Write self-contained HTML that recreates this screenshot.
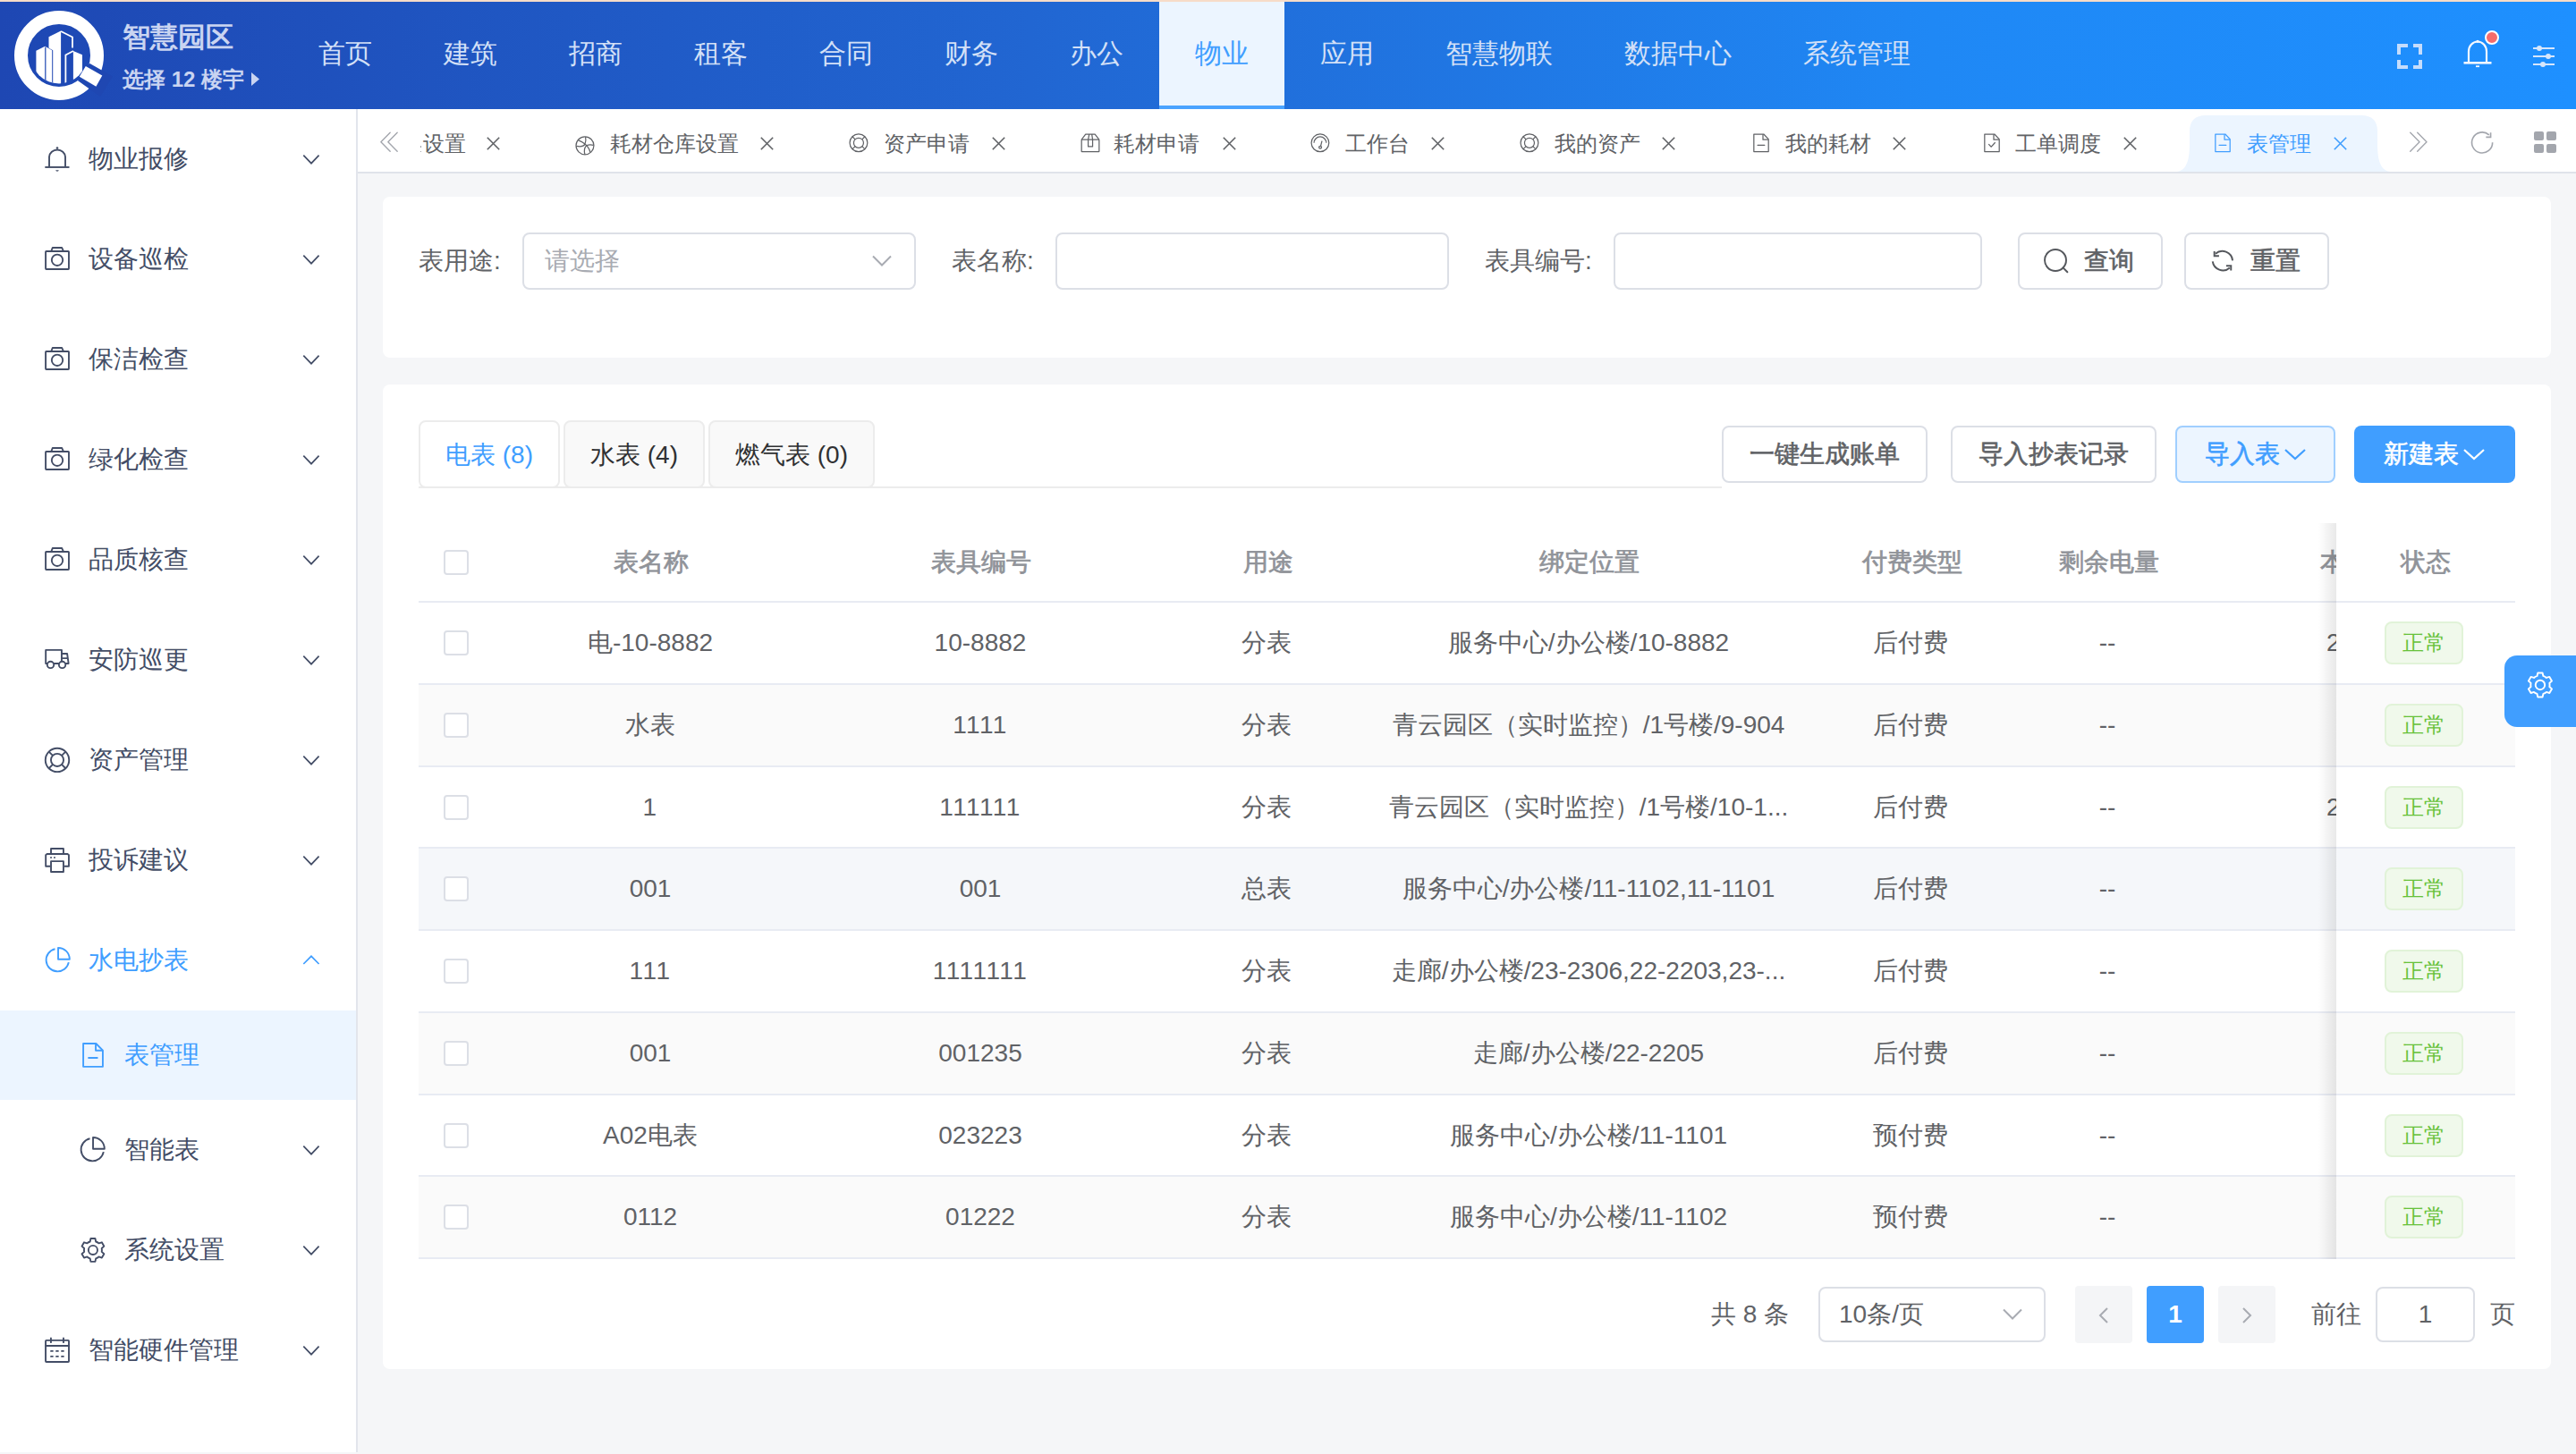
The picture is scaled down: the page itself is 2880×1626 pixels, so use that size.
<!DOCTYPE html>
<html><head><meta charset="utf-8"><title>表管理</title>
<style>
*{margin:0;padding:0;box-sizing:border-box}
html,body{width:2880px;height:1626px;overflow:hidden;background:#f5f6f8;font-family:"Liberation Sans", sans-serif}
.a{position:absolute}
.t{position:absolute;white-space:nowrap;line-height:1}
svg{position:absolute;overflow:visible}
</style></head><body>

<div class="a" style="left:0px;top:0px;width:2880px;height:2px;background:#f7dcc8"></div>
<div class="a" style="left:0px;top:2px;width:2880px;height:120px;background:linear-gradient(90deg,#1e47b3 0%,#2166d2 40%,#1f88f5 75%,#1e90ff 100%)"></div>
<svg style="left:0;top:0" width="130" height="122" viewBox="0 0 130 122">
<defs><clipPath id="lc"><circle cx="66" cy="62" r="31.5"/></clipPath></defs>
<circle cx="66" cy="62" r="42.5" fill="none" stroke="#fff" stroke-width="15"/>
<polygon points="100,70.8 126,85.6 112,108 86.8,90" fill="#1f47b2"/>
<polygon points="95.8,74.1 114.3,84.6 107.4,96.7 88.8,85.8" fill="#fff"/>
<g clip-path="url(#lc)">
<polygon points="54.5,41.3 68.1,34.4 68.1,100 54.5,100" fill="#fff"/>
<path d="M68.1,35 L81,41.5 V53.5" fill="none" stroke="#fff" stroke-width="1.8"/>
<polygon points="39.5,57.2 50.3,51.6 59.2,56.3 59.2,100 39.5,100" fill="#1f47b2"/>
<polygon points="40.4,56.8 50.3,51.8 58.2,56.3 58.2,100 40.4,100" fill="#fff"/>
<path d="M50.8,52.5 V100" stroke="#1f47b2" stroke-width="1.2"/>
<polygon points="81.9,57 92,61.2 92,100 81.9,100" fill="#fff"/>
<path d="M73.4,100 V61.5 L82,57" fill="none" stroke="#fff" stroke-width="1.8"/>
</g>
</svg>
<div class="t" style="left:137px;top:26.25px;font-size:31px;color:#c9d4f1;font-weight:700;">智慧园区</div>
<div class="t" style="left:137px;top:76.50px;font-size:24px;color:#c9d4f1;font-weight:700;">选择 12 楼宇</div>
<svg style="left:281px;top:81px" width="10" height="16"><polygon points="0,0 9,7.5 0,15" fill="#c9d4f1"/></svg>
<div class="t" style="left:-614.00px;width:2000px;text-align:center;top:45.00px;font-size:30px;color:#d3e0f7;font-weight:400;">首页</div>
<div class="t" style="left:-474.00px;width:2000px;text-align:center;top:45.00px;font-size:30px;color:#d3e0f7;font-weight:400;">建筑</div>
<div class="t" style="left:-334.00px;width:2000px;text-align:center;top:45.00px;font-size:30px;color:#d3e0f7;font-weight:400;">招商</div>
<div class="t" style="left:-194.00px;width:2000px;text-align:center;top:45.00px;font-size:30px;color:#d3e0f7;font-weight:400;">租客</div>
<div class="t" style="left:-54.00px;width:2000px;text-align:center;top:45.00px;font-size:30px;color:#d3e0f7;font-weight:400;">合同</div>
<div class="t" style="left:86.00px;width:2000px;text-align:center;top:45.00px;font-size:30px;color:#d3e0f7;font-weight:400;">财务</div>
<div class="t" style="left:226.00px;width:2000px;text-align:center;top:45.00px;font-size:30px;color:#d3e0f7;font-weight:400;">办公</div>
<div class="a" style="left:1296px;top:2px;width:140px;height:120px;background:#ecf5ff"></div>
<div class="a" style="left:1296px;top:118px;width:140px;height:4px;background:#4aa3ff"></div>
<div class="t" style="left:366.00px;width:2000px;text-align:center;top:45.00px;font-size:30px;color:#409eff;font-weight:500;">物业</div>
<div class="t" style="left:506.00px;width:2000px;text-align:center;top:45.00px;font-size:30px;color:#d3e0f7;font-weight:400;">应用</div>
<div class="t" style="left:676.00px;width:2000px;text-align:center;top:45.00px;font-size:30px;color:#d3e0f7;font-weight:400;">智慧物联</div>
<div class="t" style="left:876.00px;width:2000px;text-align:center;top:45.00px;font-size:30px;color:#d3e0f7;font-weight:400;">数据中心</div>
<div class="t" style="left:1076.00px;width:2000px;text-align:center;top:45.00px;font-size:30px;color:#d3e0f7;font-weight:400;">系统管理</div>
<svg style="left:2680px;top:49px" width="28" height="28" viewBox="0 0 28 28" fill="none" stroke="#c5dcfb" stroke-width="4">
<path d="M2,12 V2 H12 M18,2 H26 V12 M26,18 V26 H18 M12,26 H2 V18"/></svg>
<svg style="left:2752px;top:40px" width="40" height="40" viewBox="0 0 40 40" fill="none" stroke="#f3f7ff" stroke-width="2.2">
<path d="M8,30 V17.5 A10,11 0 0 1 28,17.5 V30"/>
<path d="M2.5,30.3 H33.5" stroke-width="2.6"/>
<path d="M16,34.2 H20" stroke-width="1.8"/>
<circle cx="18" cy="6.3" r="1.6" fill="#f3f7ff" stroke="none"/>
</svg>
<div class="a" style="left:2778px;top:34px;width:16px;height:16px;border-radius:50%;background:#f56c6c;border:2px solid #fff"></div>
<svg style="left:2832px;top:48px" width="26" height="30" viewBox="0 0 26 30" fill="#d6e6fb" stroke="#d6e6fb" stroke-width="2.2">
<path d="M0,6 H24 M0,15 H24 M0,24 H24" fill="none"/>
<circle cx="7" cy="6" r="3" stroke="none"/><circle cx="17" cy="15" r="3" stroke="none"/><circle cx="11" cy="24" r="3" stroke="none"/>
</svg>
<div class="a" style="left:0px;top:122px;width:398px;height:1502px;background:#fff"></div>
<div class="a" style="left:398px;top:122px;width:2px;height:1502px;background:#e2e5ec"></div>
<svg style="left:40px;top:153px" width="50" height="50" viewBox="0 0 1454 1454" fill="none" stroke="#434d66" stroke-width="55" stroke-linejoin="round"><path d="M437,975 V650 A262,245 0 0 1 960,650 V975"/><path d="M300,988 H1090" stroke-linecap="butt"/><circle cx="698" cy="365" r="38" fill="#434d66" stroke="none"/><path d="M645,1085 H750 A53,45 0 0 1 645,1085Z" fill="#434d66" stroke="none"/></svg>
<div class="t" style="left:99px;top:164.00px;font-size:28px;color:#434d66;font-weight:400;">物业报修</div>
<svg style="left:338px;top:172px" width="20" height="12" viewBox="0 0 20 12"><path d="M1.3,1.7 L10,10.7 L18.6,1.7" fill="none" stroke="#434d66" stroke-width="1.7"/></svg>
<svg style="left:40px;top:265px" width="50" height="50" viewBox="0 0 1454 1454" fill="none" stroke="#434d66" stroke-width="55" stroke-linejoin="round"><rect x="322" y="465" width="753" height="580" rx="18"/><path d="M500,465 L545,350 H850 L900,465"/><circle cx="698" cy="750" r="180"/></svg>
<div class="t" style="left:99px;top:276.00px;font-size:28px;color:#434d66;font-weight:400;">设备巡检</div>
<svg style="left:338px;top:284px" width="20" height="12" viewBox="0 0 20 12"><path d="M1.3,1.7 L10,10.7 L18.6,1.7" fill="none" stroke="#434d66" stroke-width="1.7"/></svg>
<svg style="left:40px;top:377px" width="50" height="50" viewBox="0 0 1454 1454" fill="none" stroke="#434d66" stroke-width="55" stroke-linejoin="round"><rect x="322" y="465" width="753" height="580" rx="18"/><path d="M500,465 L545,350 H850 L900,465"/><circle cx="698" cy="750" r="180"/></svg>
<div class="t" style="left:99px;top:388.00px;font-size:28px;color:#434d66;font-weight:400;">保洁检查</div>
<svg style="left:338px;top:396px" width="20" height="12" viewBox="0 0 20 12"><path d="M1.3,1.7 L10,10.7 L18.6,1.7" fill="none" stroke="#434d66" stroke-width="1.7"/></svg>
<svg style="left:40px;top:489px" width="50" height="50" viewBox="0 0 1454 1454" fill="none" stroke="#434d66" stroke-width="55" stroke-linejoin="round"><rect x="322" y="465" width="753" height="580" rx="18"/><path d="M500,465 L545,350 H850 L900,465"/><circle cx="698" cy="750" r="180"/></svg>
<div class="t" style="left:99px;top:500.00px;font-size:28px;color:#434d66;font-weight:400;">绿化检查</div>
<svg style="left:338px;top:508px" width="20" height="12" viewBox="0 0 20 12"><path d="M1.3,1.7 L10,10.7 L18.6,1.7" fill="none" stroke="#434d66" stroke-width="1.7"/></svg>
<svg style="left:40px;top:601px" width="50" height="50" viewBox="0 0 1454 1454" fill="none" stroke="#434d66" stroke-width="55" stroke-linejoin="round"><rect x="322" y="465" width="753" height="580" rx="18"/><path d="M500,465 L545,350 H850 L900,465"/><circle cx="698" cy="750" r="180"/></svg>
<div class="t" style="left:99px;top:612.00px;font-size:28px;color:#434d66;font-weight:400;">品质核查</div>
<svg style="left:338px;top:620px" width="20" height="12" viewBox="0 0 20 12"><path d="M1.3,1.7 L10,10.7 L18.6,1.7" fill="none" stroke="#434d66" stroke-width="1.7"/></svg>
<svg style="left:40px;top:713px" width="50" height="50" viewBox="0 0 1454 1454" fill="none" stroke="#434d66" stroke-width="55" stroke-linejoin="round"><path d="M380,842 H325 V405 H842 V760"/><path d="M842,522 H1020 L1065,842 H960 M842,672 H1040 M770,842 H580"/><circle cx="480" cy="885" r="108" fill="#fff"/><circle cx="860" cy="885" r="108" fill="#fff"/></svg>
<div class="t" style="left:99px;top:724.00px;font-size:28px;color:#434d66;font-weight:400;">安防巡更</div>
<svg style="left:338px;top:732px" width="20" height="12" viewBox="0 0 20 12"><path d="M1.3,1.7 L10,10.7 L18.6,1.7" fill="none" stroke="#434d66" stroke-width="1.7"/></svg>
<svg style="left:40px;top:825px" width="50" height="50" viewBox="0 0 1454 1454" fill="none" stroke="#434d66" stroke-width="55" stroke-linejoin="round"><circle cx="698" cy="725" r="385"/><circle cx="698" cy="725" r="205"/><path d="M843,580 L970,453 M553,580 L426,453 M553,870 L426,997 M843,870 L970,997"/></svg>
<div class="t" style="left:99px;top:836.00px;font-size:28px;color:#434d66;font-weight:400;">资产管理</div>
<svg style="left:338px;top:844px" width="20" height="12" viewBox="0 0 20 12"><path d="M1.3,1.7 L10,10.7 L18.6,1.7" fill="none" stroke="#434d66" stroke-width="1.7"/></svg>
<svg style="left:40px;top:937px" width="50" height="50" viewBox="0 0 1454 1454" fill="none" stroke="#434d66" stroke-width="55" stroke-linejoin="round"><path d="M495,525 V347 H900 V525"/><path d="M470,925 H325 V560 L360,525 H1040 L1075,560 V925 H925"/><rect x="495" y="760" width="405" height="345"/><rect x="470" y="615" width="50" height="50" fill="#434d66" stroke="none"/><rect x="585" y="615" width="50" height="50" fill="#434d66" stroke="none"/></svg>
<div class="t" style="left:99px;top:948.00px;font-size:28px;color:#434d66;font-weight:400;">投诉建议</div>
<svg style="left:338px;top:956px" width="20" height="12" viewBox="0 0 20 12"><path d="M1.3,1.7 L10,10.7 L18.6,1.7" fill="none" stroke="#434d66" stroke-width="1.7"/></svg>
<svg style="left:40px;top:1049px" width="50" height="50" viewBox="0 0 1454 1454" fill="none" stroke="#409eff" stroke-width="55" stroke-linejoin="round"><path d="M625,355 A370,370 0 1 0 1070,790"/><path d="M728,690 V318 A372,372 0 0 1 1100,690 Z"/></svg>
<div class="t" style="left:99px;top:1060.00px;font-size:28px;color:#409eff;font-weight:400;">水电抄表</div>
<svg style="left:338px;top:1068px" width="20" height="12" viewBox="0 0 20 12"><path d="M1.3,10 L10,1.3 L18.6,10" fill="none" stroke="#409eff" stroke-width="1.7"/></svg>
<div class="a" style="left:0px;top:1130px;width:398px;height:100px;background:#ecf5ff"></div>
<svg style="left:79px;top:1155px" width="50" height="50" viewBox="0 0 1454 1454" fill="none" stroke="#409eff" stroke-width="55" stroke-linejoin="round"><path d="M825,350 H410 V1100 H1045 V570 Z"/><path d="M815,355 V575 H1040"/><path d="M585,815 H865" stroke-linecap="round"/></svg>
<div class="t" style="left:139px;top:1166.00px;font-size:28px;color:#409eff;font-weight:400;">表管理</div>
<svg style="left:79px;top:1261px" width="50" height="50" viewBox="0 0 1454 1454" fill="none" stroke="#434d66" stroke-width="55" stroke-linejoin="round"><path d="M625,355 A370,370 0 1 0 1070,790"/><path d="M728,690 V318 A372,372 0 0 1 1100,690 Z"/></svg>
<div class="t" style="left:139px;top:1272.00px;font-size:28px;color:#434d66;font-weight:400;">智能表</div>
<svg style="left:338px;top:1280px" width="20" height="12" viewBox="0 0 20 12"><path d="M1.3,1.7 L10,10.7 L18.6,1.7" fill="none" stroke="#434d66" stroke-width="1.7"/></svg>
<svg style="left:79px;top:1373px" width="50" height="50" viewBox="0 0 1454 1454" fill="none" stroke="#434d66" stroke-width="55" stroke-linejoin="round"><path d="M630.6,450.8 L652.1,350.0 L797.9,350.0 L819.4,450.8 A290,290 0 0 1 915.3,506.1 L1013.3,474.4 L1086.2,600.6 L1009.7,669.7 A290,290 0 0 1 1009.7,780.3 L1086.2,849.4 L1013.3,975.6 L915.3,943.9 A290,290 0 0 1 819.4,999.2 L797.9,1100.0 L652.1,1100.0 L630.6,999.2 A290,290 0 0 1 534.7,943.9 L436.7,975.6 L363.8,849.4 L440.3,780.3 A290,290 0 0 1 440.3,669.7 L363.8,600.6 L436.7,474.4 L534.7,506.1 A290,290 0 0 1 630.6,450.8 Z"/><circle cx="725" cy="725" r="147"/></svg>
<div class="t" style="left:139px;top:1384.00px;font-size:28px;color:#434d66;font-weight:400;">系统设置</div>
<svg style="left:338px;top:1392px" width="20" height="12" viewBox="0 0 20 12"><path d="M1.3,1.7 L10,10.7 L18.6,1.7" fill="none" stroke="#434d66" stroke-width="1.7"/></svg>
<svg style="left:39px;top:1485px" width="50" height="50" viewBox="0 0 1454 1454" fill="none" stroke="#434d66" stroke-width="55" stroke-linejoin="round"><rect x="350" y="405" width="755" height="700" rx="25"/><path d="M350,580 H1105 M522,335 V470 M930,335 V470" stroke-linecap="round"/><rect x="500" y="730" width="100" height="50" rx="12" fill="#434d66" stroke="none"/><rect x="675" y="730" width="100" height="50" rx="12" fill="#434d66" stroke="none"/><rect x="850" y="730" width="100" height="50" rx="12" fill="#434d66" stroke="none"/><rect x="500" y="905" width="100" height="50" rx="12" fill="#434d66" stroke="none"/><rect x="675" y="905" width="100" height="50" rx="12" fill="#434d66" stroke="none"/><rect x="850" y="905" width="100" height="50" rx="12" fill="#434d66" stroke="none"/></svg>
<div class="t" style="left:99px;top:1496.00px;font-size:28px;color:#434d66;font-weight:400;">智能硬件管理</div>
<svg style="left:338px;top:1504px" width="20" height="12" viewBox="0 0 20 12"><path d="M1.3,1.7 L10,10.7 L18.6,1.7" fill="none" stroke="#434d66" stroke-width="1.7"/></svg>
<div class="a" style="left:400px;top:122px;width:2480px;height:70px;background:#fff"></div>
<div class="a" style="left:400px;top:192px;width:2480px;height:2px;background:#dfe3ea"></div>
<svg style="left:415px;top:139px" width="40" height="40" viewBox="0 0 1454 1454" fill="none" stroke="#a3a6ad" stroke-width="50" stroke-linejoin="round"><path d="M770,340 L395,715 L770,1100 M1060,340 L685,715 L1060,1100" stroke-linecap="round"/></svg>
<svg style="left:0;top:0" width="2880" height="200"><path d="M2434,192 C2446,190 2448,176 2448,160 V147 Q2448,129 2466,129 H2640 Q2658,129 2658,147 V160 C2658,176 2660,190 2672,192 Z" fill="#ecf5ff"/></svg>
<div class="t" style="left:472.8px;top:148.50px;font-size:24px;color:#606266;font-weight:400;">设置</div>
<svg style="left:544px;top:153px" width="15" height="15" viewBox="0 0 15 15"><path d="M0.8,0.8 L14.2,14.2 M14.2,0.8 L0.8,14.2" stroke="#606266" stroke-width="1.6" fill="none"/></svg>
<svg style="left:635.1089408528198px;top:140px" width="40" height="40" viewBox="0 0 1454 1454" fill="none" stroke="#606266" stroke-width="45" stroke-linejoin="round"><circle cx="690" cy="830" r="362"/><path d="M712,478 C740,600 720,700 690,770 M425,615 C540,660 620,700 700,770 M340,850 C480,880 640,860 700,770 M700,770 C800,860 880,960 905,1105 M770,820 C860,780 960,790 1040,815 M690,1190 C640,1040 660,930 745,830"/></svg>
<div class="t" style="left:681.6px;top:148.50px;font-size:24px;color:#606266;font-weight:400;">耗材仓库设置</div>
<svg style="left:850px;top:153px" width="15" height="15" viewBox="0 0 15 15"><path d="M0.8,0.8 L14.2,14.2 M14.2,0.8 L0.8,14.2" stroke="#606266" stroke-width="1.6" fill="none"/></svg>
<svg style="left:940.4587345254471px;top:140px" width="40" height="40" viewBox="0 0 1454 1454" fill="none" stroke="#606266" stroke-width="45" stroke-linejoin="round"><circle cx="725" cy="720" r="360"/><circle cx="725" cy="720" r="200"/><path d="M866,579 L980,465 M584,579 L470,465 M584,861 L470,975 M866,861 L980,975"/></svg>
<div class="t" style="left:988px;top:148.50px;font-size:24px;color:#606266;font-weight:400;">资产申请</div>
<svg style="left:1108.5px;top:153px" width="15" height="15" viewBox="0 0 15 15"><path d="M0.8,0.8 L14.2,14.2 M14.2,0.8 L0.8,14.2" stroke="#606266" stroke-width="1.6" fill="none"/></svg>
<svg style="left:1199.1089408528196px;top:140px" width="40" height="40" viewBox="0 0 1454 1454" fill="none" stroke="#606266" stroke-width="45" stroke-linejoin="round"><rect x="370" y="590" width="715" height="490" rx="15"/><path d="M370,590 L535,370 H915 L1085,590 M640,590 L680,380 M790,380 L820,590 M640,590 V870 H820 V590"/></svg>
<div class="t" style="left:1245px;top:148.50px;font-size:24px;color:#606266;font-weight:400;">耗材申请</div>
<svg style="left:1366.6px;top:153px" width="15" height="15" viewBox="0 0 15 15"><path d="M0.8,0.8 L14.2,14.2 M14.2,0.8 L0.8,14.2" stroke="#606266" stroke-width="1.6" fill="none"/></svg>
<svg style="left:1455.958734525447px;top:140px" width="40" height="40" viewBox="0 0 1454 1454" fill="none" stroke="#606266" stroke-width="45" stroke-linejoin="round"><circle cx="725" cy="720" r="358"/><path d="M475,720 A250,250 0 0 1 975,720" /><path d="M800,640 L745,850"/><circle cx="730" cy="900" r="52"/></svg>
<div class="t" style="left:1503.8px;top:148.50px;font-size:24px;color:#606266;font-weight:400;">工作台</div>
<svg style="left:1600px;top:153px" width="15" height="15" viewBox="0 0 15 15"><path d="M0.8,0.8 L14.2,14.2 M14.2,0.8 L0.8,14.2" stroke="#606266" stroke-width="1.6" fill="none"/></svg>
<svg style="left:1689.958734525447px;top:140px" width="40" height="40" viewBox="0 0 1454 1454" fill="none" stroke="#606266" stroke-width="45" stroke-linejoin="round"><circle cx="725" cy="720" r="360"/><circle cx="725" cy="720" r="200"/><path d="M866,579 L980,465 M584,579 L470,465 M584,861 L470,975 M866,861 L980,975"/></svg>
<div class="t" style="left:1738px;top:148.50px;font-size:24px;color:#606266;font-weight:400;">我的资产</div>
<svg style="left:1858px;top:153px" width="15" height="15" viewBox="0 0 15 15"><path d="M0.8,0.8 L14.2,14.2 M14.2,0.8 L0.8,14.2" stroke="#606266" stroke-width="1.6" fill="none"/></svg>
<svg style="left:1948.5207702888583px;top:140px" width="40" height="40" viewBox="0 0 1454 1454" fill="none" stroke="#606266" stroke-width="45" stroke-linejoin="round"><path d="M830,365 H430 V1075 H1025 V570 Z"/><path d="M800,370 V590 H1020"/><path d="M585,815 H865" stroke-linecap="round"/></svg>
<div class="t" style="left:1995.7px;top:148.50px;font-size:24px;color:#606266;font-weight:400;">我的耗材</div>
<svg style="left:2116px;top:153px" width="15" height="15" viewBox="0 0 15 15"><path d="M0.8,0.8 L14.2,14.2 M14.2,0.8 L0.8,14.2" stroke="#606266" stroke-width="1.6" fill="none"/></svg>
<svg style="left:2206.720770288858px;top:140px" width="40" height="40" viewBox="0 0 1454 1454" fill="none" stroke="#606266" stroke-width="45" stroke-linejoin="round"><path d="M830,365 H430 V1075 H1025 V570 Z"/><path d="M800,370 V590 H1020"/><path d="M590,770 L700,880 L860,700"/></svg>
<div class="t" style="left:2253px;top:148.50px;font-size:24px;color:#606266;font-weight:400;">工单调度</div>
<svg style="left:2374px;top:153px" width="15" height="15" viewBox="0 0 15 15"><path d="M0.8,0.8 L14.2,14.2 M14.2,0.8 L0.8,14.2" stroke="#606266" stroke-width="1.6" fill="none"/></svg>
<svg style="left:2464.720770288858px;top:140px" width="40" height="40" viewBox="0 0 1454 1454" fill="none" stroke="#409eff" stroke-width="45" stroke-linejoin="round"><path d="M830,365 H430 V1075 H1025 V570 Z"/><path d="M800,370 V590 H1020"/><path d="M585,815 H865" stroke-linecap="round"/></svg>
<div class="t" style="left:2512px;top:148.50px;font-size:24px;color:#409eff;font-weight:400;">表管理</div>
<svg style="left:2609px;top:153px" width="15" height="15" viewBox="0 0 15 15"><path d="M0.8,0.8 L14.2,14.2 M14.2,0.8 L0.8,14.2" stroke="#409eff" stroke-width="1.6" fill="none"/></svg>
<div class="a" style="left:469.8px;top:163.4px;width:1.4px;height:1.4px;background:#8a8d92;border-radius:50%"></div>
<div class="a" style="left:469.8px;top:168.6px;width:1.4px;height:1.4px;background:#8a8d92;border-radius:50%"></div>
<svg style="left:2684px;top:139px" width="40" height="40" viewBox="0 0 1454 1454" fill="none" stroke="#a3a6ad" stroke-width="50" stroke-linejoin="round"><path d="M390,340 L765,715 L390,1100 M680,340 L1055,715 L680,1100" stroke-linecap="round"/></svg>
<svg style="left:2755px;top:139px" width="40" height="40" viewBox="0 0 1454 1454" fill="none" stroke="#a3a6ad" stroke-width="60" stroke-linejoin="round"><path d="M1150,735 A420,420 0 1 1 1010,430"/><path d="M1075,335 V520 H885" stroke-linejoin="miter"/></svg>
<div class="a" style="left:2833px;top:147px;width:10.5px;height:10px;background:#a3a6ad;border-radius:2px"></div>
<div class="a" style="left:2847px;top:147px;width:10.5px;height:10px;background:#a3a6ad;border-radius:2px"></div>
<div class="a" style="left:2833px;top:161px;width:10.5px;height:10px;background:#a3a6ad;border-radius:2px"></div>
<div class="a" style="left:2847px;top:161px;width:10.5px;height:10px;background:#a3a6ad;border-radius:2px"></div>
<div class="a" style="left:428px;top:220px;width:2424px;height:180px;background:#fff;border-radius:8px"></div>
<div class="t" style="left:468px;top:278.00px;font-size:28px;color:#606266;font-weight:400;">表用途:</div>
<div class="a" style="left:584px;top:260px;width:440px;height:64px;border:2px solid #dcdfe6;border-radius:8px;background:#fff"></div>
<div class="t" style="left:609px;top:278.00px;font-size:28px;color:#a8abb2;font-weight:400;">请选择</div>
<svg style="left:975px;top:285px" width="22" height="14" viewBox="0 0 22 14"><path d="M1,1.5 L11,11.5 L21,1.5" fill="none" stroke="#a8abb2" stroke-width="2"/></svg>
<div class="t" style="left:1064px;top:278.00px;font-size:28px;color:#606266;font-weight:400;">表名称:</div>
<div class="a" style="left:1180px;top:260px;width:440px;height:64px;border:2px solid #dcdfe6;border-radius:8px;background:#fff"></div>
<div class="t" style="left:1660px;top:278.00px;font-size:28px;color:#606266;font-weight:400;">表具编号:</div>
<div class="a" style="left:1804px;top:260px;width:412px;height:64px;border:2px solid #dcdfe6;border-radius:8px;background:#fff"></div>
<div class="a" style="left:2256px;top:260px;width:162px;height:64px;border:2px solid #dcdfe6;border-radius:8px;background:#fff"></div>
<svg style="left:2276px;top:273px" width="40" height="40" viewBox="0 0 1454 1454" fill="none" stroke="#55585d" stroke-width="72" stroke-linejoin="round"><circle cx="800" cy="655" r="435"/><path d="M1110,960 L1285,1135" stroke-linecap="round"/></svg>
<div class="t" style="left:2330px;top:278.00px;font-size:28px;color:#606266;font-weight:400;-webkit-text-stroke:0.6px #606266">查询</div>
<div class="a" style="left:2442px;top:260px;width:162px;height:64px;border:2px solid #dcdfe6;border-radius:8px;background:#fff"></div>
<svg style="left:2464px;top:273px" width="40" height="40" viewBox="0 0 1454 1454" fill="none" stroke="#55585d" stroke-width="72" stroke-linejoin="round"><path d="M1165,665 A420,420 0 0 0 470,390"/><path d="M425,290 V480 H615" stroke-linejoin="miter"/><path d="M355,705 A420,420 0 0 0 1050,960"/><path d="M1100,1075 V885 H905" stroke-linejoin="miter"/></svg>
<div class="t" style="left:2516px;top:278.00px;font-size:28px;color:#606266;font-weight:400;-webkit-text-stroke:0.6px #606266">重置</div>
<div class="a" style="left:428px;top:430px;width:2424px;height:1101px;background:#fff;border-radius:8px"></div>
<div class="a" style="left:468px;top:544px;width:1457px;height:2px;background:#ececec"></div>
<div class="a" style="left:468px;top:470px;width:158px;height:76px;background:#fff;border:2px solid #ececec;border-radius:8px"></div>
<div class="a" style="left:630px;top:470px;width:158px;height:76px;background:#f9f9f9;border:2px solid #ececec;border-radius:8px"></div>
<div class="a" style="left:792px;top:470px;width:186px;height:76px;background:#f9f9f9;border:2px solid #ececec;border-radius:8px"></div>
<div class="t" style="left:-453.00px;width:2000px;text-align:center;top:495.00px;font-size:28px;color:#409eff;font-weight:400;">电表 (8)</div>
<div class="t" style="left:-291.00px;width:2000px;text-align:center;top:495.00px;font-size:28px;color:#303133;font-weight:400;">水表 (4)</div>
<div class="t" style="left:-115.00px;width:2000px;text-align:center;top:495.00px;font-size:28px;color:#303133;font-weight:400;">燃气表 (0)</div>
<div class="a" style="left:1925px;top:476px;width:230px;height:64px;border:2px solid #dcdfe6;border-radius:8px;background:#fff"></div>
<div class="t" style="left:1040.00px;width:2000px;text-align:center;top:493.50px;font-size:28px;color:#606266;font-weight:400;-webkit-text-stroke:0.6px #606266">一键生成账单</div>
<div class="a" style="left:2181px;top:476px;width:230px;height:64px;border:2px solid #dcdfe6;border-radius:8px;background:#fff"></div>
<div class="t" style="left:1296.00px;width:2000px;text-align:center;top:493.50px;font-size:28px;color:#606266;font-weight:400;-webkit-text-stroke:0.6px #606266">导入抄表记录</div>
<div class="a" style="left:2432px;top:476px;width:179px;height:64px;border:2px solid #a0cfff;border-radius:8px;background:#ecf5ff"></div>
<div class="t" style="left:2464.5px;top:493.50px;font-size:28px;color:#409eff;font-weight:400;-webkit-text-stroke:0.6px #409eff">导入表</div>
<svg style="left:2552.5px;top:501px" width="26" height="14" viewBox="0 0 26 14"><path d="M2,2 L13,12 L24,2" fill="none" stroke="#409eff" stroke-width="2.2"/></svg>
<div class="a" style="left:2632px;top:476px;width:180px;height:64px;border:none;border-radius:8px;background:#409eff"></div>
<div class="t" style="left:2665.0px;top:493.50px;font-size:28px;color:#ffffff;font-weight:400;-webkit-text-stroke:0.6px #ffffff">新建表</div>
<svg style="left:2753.0px;top:501px" width="26" height="14" viewBox="0 0 26 14"><path d="M2,2 L13,12 L24,2" fill="none" stroke="#ffffff" stroke-width="2.2"/></svg>
<div class="a" style="left:468px;top:674.0px;width:2344px;height:89.75px;background:#fff"></div>
<div class="a" style="left:468px;top:765.75px;width:2344px;height:89.75px;background:#fafafa"></div>
<div class="a" style="left:468px;top:857.5px;width:2344px;height:89.75px;background:#fff"></div>
<div class="a" style="left:468px;top:949.25px;width:2344px;height:89.75px;background:#f5f7fa"></div>
<div class="a" style="left:468px;top:1041.0px;width:2344px;height:89.75px;background:#fff"></div>
<div class="a" style="left:468px;top:1132.75px;width:2344px;height:89.75px;background:#fafafa"></div>
<div class="a" style="left:468px;top:1224.5px;width:2344px;height:89.75px;background:#fff"></div>
<div class="a" style="left:468px;top:1316.25px;width:2344px;height:89.75px;background:#fafafa"></div>
<div class="a" style="left:468px;top:672.0px;width:2344px;height:2px;background:#e8ebf3"></div>
<div class="a" style="left:468px;top:763.75px;width:2344px;height:2px;background:#e8ebf3"></div>
<div class="a" style="left:468px;top:855.5px;width:2344px;height:2px;background:#e8ebf3"></div>
<div class="a" style="left:468px;top:947.25px;width:2344px;height:2px;background:#e8ebf3"></div>
<div class="a" style="left:468px;top:1039.0px;width:2344px;height:2px;background:#e8ebf3"></div>
<div class="a" style="left:468px;top:1130.75px;width:2344px;height:2px;background:#e8ebf3"></div>
<div class="a" style="left:468px;top:1222.5px;width:2344px;height:2px;background:#e8ebf3"></div>
<div class="a" style="left:468px;top:1314.25px;width:2344px;height:2px;background:#e8ebf3"></div>
<div class="a" style="left:468px;top:1406.0px;width:2344px;height:2px;background:#e8ebf3"></div>
<div class="a" style="left:496px;top:615px;width:28px;height:28px;border:2px solid #dcdfe6;border-radius:4px;background:#fff"></div>
<div class="t" style="left:-272.30px;width:2000px;text-align:center;top:615.00px;font-size:28px;color:#909399;font-weight:400;-webkit-text-stroke:0.7px #909399">表名称</div>
<div class="t" style="left:96.80px;width:2000px;text-align:center;top:615.00px;font-size:28px;color:#909399;font-weight:400;-webkit-text-stroke:0.7px #909399">表具编号</div>
<div class="t" style="left:417.60px;width:2000px;text-align:center;top:615.00px;font-size:28px;color:#909399;font-weight:400;-webkit-text-stroke:0.7px #909399">用途</div>
<div class="t" style="left:776.50px;width:2000px;text-align:center;top:615.00px;font-size:28px;color:#909399;font-weight:400;-webkit-text-stroke:0.7px #909399">绑定位置</div>
<div class="t" style="left:1137.70px;width:2000px;text-align:center;top:615.00px;font-size:28px;color:#909399;font-weight:400;-webkit-text-stroke:0.7px #909399">付费类型</div>
<div class="t" style="left:1358.40px;width:2000px;text-align:center;top:615.00px;font-size:28px;color:#909399;font-weight:400;-webkit-text-stroke:0.7px #909399">剩余电量</div>
<div class="t" style="left:2594px;top:615.00px;font-size:28px;color:#909399;font-weight:400;-webkit-text-stroke:0.7px #909399">本</div>
<div class="a" style="left:496px;top:705.0px;width:28px;height:28px;border:2px solid #dcdfe6;border-radius:4px;background:#fff"></div>
<div class="t" style="left:-273.00px;width:2000px;text-align:center;top:705.00px;font-size:28px;color:#606266;font-weight:400;">电-10-8882</div>
<div class="t" style="left:96.00px;width:2000px;text-align:center;top:705.00px;font-size:28px;color:#606266;font-weight:400;">10-8882</div>
<div class="t" style="left:416.00px;width:2000px;text-align:center;top:705.00px;font-size:28px;color:#606266;font-weight:400;">分表</div>
<div class="t" style="left:776.00px;width:2000px;text-align:center;top:705.00px;font-size:28px;color:#606266;font-weight:400;">服务中心/办公楼/10-8882</div>
<div class="t" style="left:1136.00px;width:2000px;text-align:center;top:705.00px;font-size:28px;color:#606266;font-weight:400;">后付费</div>
<div class="t" style="left:1356.00px;width:2000px;text-align:center;top:705.00px;font-size:28px;color:#606266;font-weight:400;">--</div>
<div class="t" style="left:2601px;top:705.00px;font-size:28px;color:#606266;font-weight:400;">2</div>
<div class="a" style="left:496px;top:796.75px;width:28px;height:28px;border:2px solid #dcdfe6;border-radius:4px;background:#fff"></div>
<div class="t" style="left:-273.00px;width:2000px;text-align:center;top:796.75px;font-size:28px;color:#606266;font-weight:400;">水表</div>
<div class="t" style="left:96.00px;width:2000px;text-align:center;top:796.75px;font-size:28px;color:#606266;font-weight:400;letter-spacing:1.4px;">1111</div>
<div class="t" style="left:416.00px;width:2000px;text-align:center;top:796.75px;font-size:28px;color:#606266;font-weight:400;">分表</div>
<div class="t" style="left:776.00px;width:2000px;text-align:center;top:796.75px;font-size:28px;color:#606266;font-weight:400;">青云园区（实时监控）/1号楼/9-904</div>
<div class="t" style="left:1136.00px;width:2000px;text-align:center;top:796.75px;font-size:28px;color:#606266;font-weight:400;">后付费</div>
<div class="t" style="left:1356.00px;width:2000px;text-align:center;top:796.75px;font-size:28px;color:#606266;font-weight:400;">--</div>
<div class="a" style="left:496px;top:888.5px;width:28px;height:28px;border:2px solid #dcdfe6;border-radius:4px;background:#fff"></div>
<div class="t" style="left:-273.00px;width:2000px;text-align:center;top:888.50px;font-size:28px;color:#606266;font-weight:400;letter-spacing:1.4px;">1</div>
<div class="t" style="left:96.00px;width:2000px;text-align:center;top:888.50px;font-size:28px;color:#606266;font-weight:400;letter-spacing:1.4px;">111111</div>
<div class="t" style="left:416.00px;width:2000px;text-align:center;top:888.50px;font-size:28px;color:#606266;font-weight:400;">分表</div>
<div class="t" style="left:776.00px;width:2000px;text-align:center;top:888.50px;font-size:28px;color:#606266;font-weight:400;">青云园区（实时监控）/1号楼/10-1...</div>
<div class="t" style="left:1136.00px;width:2000px;text-align:center;top:888.50px;font-size:28px;color:#606266;font-weight:400;">后付费</div>
<div class="t" style="left:1356.00px;width:2000px;text-align:center;top:888.50px;font-size:28px;color:#606266;font-weight:400;">--</div>
<div class="t" style="left:2601px;top:888.50px;font-size:28px;color:#606266;font-weight:400;">2</div>
<div class="a" style="left:496px;top:980.25px;width:28px;height:28px;border:2px solid #dcdfe6;border-radius:4px;background:#fff"></div>
<div class="t" style="left:-273.00px;width:2000px;text-align:center;top:980.25px;font-size:28px;color:#606266;font-weight:400;">001</div>
<div class="t" style="left:96.00px;width:2000px;text-align:center;top:980.25px;font-size:28px;color:#606266;font-weight:400;">001</div>
<div class="t" style="left:416.00px;width:2000px;text-align:center;top:980.25px;font-size:28px;color:#606266;font-weight:400;">总表</div>
<div class="t" style="left:776.00px;width:2000px;text-align:center;top:980.25px;font-size:28px;color:#606266;font-weight:400;">服务中心/办公楼/11-1102,11-1101</div>
<div class="t" style="left:1136.00px;width:2000px;text-align:center;top:980.25px;font-size:28px;color:#606266;font-weight:400;">后付费</div>
<div class="t" style="left:1356.00px;width:2000px;text-align:center;top:980.25px;font-size:28px;color:#606266;font-weight:400;">--</div>
<div class="a" style="left:496px;top:1072.0px;width:28px;height:28px;border:2px solid #dcdfe6;border-radius:4px;background:#fff"></div>
<div class="t" style="left:-273.00px;width:2000px;text-align:center;top:1072.00px;font-size:28px;color:#606266;font-weight:400;letter-spacing:1.4px;">111</div>
<div class="t" style="left:96.00px;width:2000px;text-align:center;top:1072.00px;font-size:28px;color:#606266;font-weight:400;letter-spacing:1.4px;">1111111</div>
<div class="t" style="left:416.00px;width:2000px;text-align:center;top:1072.00px;font-size:28px;color:#606266;font-weight:400;">分表</div>
<div class="t" style="left:776.00px;width:2000px;text-align:center;top:1072.00px;font-size:28px;color:#606266;font-weight:400;">走廊/办公楼/23-2306,22-2203,23-...</div>
<div class="t" style="left:1136.00px;width:2000px;text-align:center;top:1072.00px;font-size:28px;color:#606266;font-weight:400;">后付费</div>
<div class="t" style="left:1356.00px;width:2000px;text-align:center;top:1072.00px;font-size:28px;color:#606266;font-weight:400;">--</div>
<div class="a" style="left:496px;top:1163.75px;width:28px;height:28px;border:2px solid #dcdfe6;border-radius:4px;background:#fff"></div>
<div class="t" style="left:-273.00px;width:2000px;text-align:center;top:1163.75px;font-size:28px;color:#606266;font-weight:400;">001</div>
<div class="t" style="left:96.00px;width:2000px;text-align:center;top:1163.75px;font-size:28px;color:#606266;font-weight:400;">001235</div>
<div class="t" style="left:416.00px;width:2000px;text-align:center;top:1163.75px;font-size:28px;color:#606266;font-weight:400;">分表</div>
<div class="t" style="left:776.00px;width:2000px;text-align:center;top:1163.75px;font-size:28px;color:#606266;font-weight:400;">走廊/办公楼/22-2205</div>
<div class="t" style="left:1136.00px;width:2000px;text-align:center;top:1163.75px;font-size:28px;color:#606266;font-weight:400;">后付费</div>
<div class="t" style="left:1356.00px;width:2000px;text-align:center;top:1163.75px;font-size:28px;color:#606266;font-weight:400;">--</div>
<div class="a" style="left:496px;top:1255.5px;width:28px;height:28px;border:2px solid #dcdfe6;border-radius:4px;background:#fff"></div>
<div class="t" style="left:-273.00px;width:2000px;text-align:center;top:1255.50px;font-size:28px;color:#606266;font-weight:400;">A02电表</div>
<div class="t" style="left:96.00px;width:2000px;text-align:center;top:1255.50px;font-size:28px;color:#606266;font-weight:400;">023223</div>
<div class="t" style="left:416.00px;width:2000px;text-align:center;top:1255.50px;font-size:28px;color:#606266;font-weight:400;">分表</div>
<div class="t" style="left:776.00px;width:2000px;text-align:center;top:1255.50px;font-size:28px;color:#606266;font-weight:400;">服务中心/办公楼/11-1101</div>
<div class="t" style="left:1136.00px;width:2000px;text-align:center;top:1255.50px;font-size:28px;color:#606266;font-weight:400;">预付费</div>
<div class="t" style="left:1356.00px;width:2000px;text-align:center;top:1255.50px;font-size:28px;color:#606266;font-weight:400;">--</div>
<div class="a" style="left:496px;top:1347.25px;width:28px;height:28px;border:2px solid #dcdfe6;border-radius:4px;background:#fff"></div>
<div class="t" style="left:-273.00px;width:2000px;text-align:center;top:1347.25px;font-size:28px;color:#606266;font-weight:400;">0112</div>
<div class="t" style="left:96.00px;width:2000px;text-align:center;top:1347.25px;font-size:28px;color:#606266;font-weight:400;">01222</div>
<div class="t" style="left:416.00px;width:2000px;text-align:center;top:1347.25px;font-size:28px;color:#606266;font-weight:400;">分表</div>
<div class="t" style="left:776.00px;width:2000px;text-align:center;top:1347.25px;font-size:28px;color:#606266;font-weight:400;">服务中心/办公楼/11-1102</div>
<div class="t" style="left:1136.00px;width:2000px;text-align:center;top:1347.25px;font-size:28px;color:#606266;font-weight:400;">预付费</div>
<div class="t" style="left:1356.00px;width:2000px;text-align:center;top:1347.25px;font-size:28px;color:#606266;font-weight:400;">--</div>
<div class="a" style="left:2592px;top:585px;width:20px;height:823.0px;background:linear-gradient(90deg,rgba(0,0,0,0),rgba(0,0,0,0.09))"></div>
<div class="a" style="left:2612px;top:585px;width:200px;height:87px;background:#fff"></div>
<div class="t" style="left:1711.60px;width:2000px;text-align:center;top:615.00px;font-size:28px;color:#909399;font-weight:400;-webkit-text-stroke:0.7px #909399">状态</div>
<div class="a" style="left:2612px;top:674.0px;width:200px;height:89.75px;background:#fff"></div>
<div class="a" style="left:2612px;top:765.75px;width:200px;height:89.75px;background:#fafafa"></div>
<div class="a" style="left:2612px;top:857.5px;width:200px;height:89.75px;background:#fff"></div>
<div class="a" style="left:2612px;top:949.25px;width:200px;height:89.75px;background:#f5f7fa"></div>
<div class="a" style="left:2612px;top:1041.0px;width:200px;height:89.75px;background:#fff"></div>
<div class="a" style="left:2612px;top:1132.75px;width:200px;height:89.75px;background:#fafafa"></div>
<div class="a" style="left:2612px;top:1224.5px;width:200px;height:89.75px;background:#fff"></div>
<div class="a" style="left:2612px;top:1316.25px;width:200px;height:89.75px;background:#fafafa"></div>
<div class="a" style="left:2612px;top:672.0px;width:200px;height:2px;background:#e8ebf3"></div>
<div class="a" style="left:2612px;top:763.75px;width:200px;height:2px;background:#e8ebf3"></div>
<div class="a" style="left:2612px;top:855.5px;width:200px;height:2px;background:#e8ebf3"></div>
<div class="a" style="left:2612px;top:947.25px;width:200px;height:2px;background:#e8ebf3"></div>
<div class="a" style="left:2612px;top:1039.0px;width:200px;height:2px;background:#e8ebf3"></div>
<div class="a" style="left:2612px;top:1130.75px;width:200px;height:2px;background:#e8ebf3"></div>
<div class="a" style="left:2612px;top:1222.5px;width:200px;height:2px;background:#e8ebf3"></div>
<div class="a" style="left:2612px;top:1314.25px;width:200px;height:2px;background:#e8ebf3"></div>
<div class="a" style="left:2612px;top:1406.0px;width:200px;height:2px;background:#e8ebf3"></div>
<div class="a" style="left:2666px;top:695.0px;width:88px;height:48px;background:#f0f9eb;border:2px solid #e1f3d8;border-radius:8px"></div>
<div class="t" style="left:1710.00px;width:2000px;text-align:center;top:707.00px;font-size:24px;color:#67c23a;font-weight:400;">正常</div>
<div class="a" style="left:2666px;top:786.75px;width:88px;height:48px;background:#f0f9eb;border:2px solid #e1f3d8;border-radius:8px"></div>
<div class="t" style="left:1710.00px;width:2000px;text-align:center;top:798.75px;font-size:24px;color:#67c23a;font-weight:400;">正常</div>
<div class="a" style="left:2666px;top:878.5px;width:88px;height:48px;background:#f0f9eb;border:2px solid #e1f3d8;border-radius:8px"></div>
<div class="t" style="left:1710.00px;width:2000px;text-align:center;top:890.50px;font-size:24px;color:#67c23a;font-weight:400;">正常</div>
<div class="a" style="left:2666px;top:970.25px;width:88px;height:48px;background:#f0f9eb;border:2px solid #e1f3d8;border-radius:8px"></div>
<div class="t" style="left:1710.00px;width:2000px;text-align:center;top:982.25px;font-size:24px;color:#67c23a;font-weight:400;">正常</div>
<div class="a" style="left:2666px;top:1062.0px;width:88px;height:48px;background:#f0f9eb;border:2px solid #e1f3d8;border-radius:8px"></div>
<div class="t" style="left:1710.00px;width:2000px;text-align:center;top:1074.00px;font-size:24px;color:#67c23a;font-weight:400;">正常</div>
<div class="a" style="left:2666px;top:1153.75px;width:88px;height:48px;background:#f0f9eb;border:2px solid #e1f3d8;border-radius:8px"></div>
<div class="t" style="left:1710.00px;width:2000px;text-align:center;top:1165.75px;font-size:24px;color:#67c23a;font-weight:400;">正常</div>
<div class="a" style="left:2666px;top:1245.5px;width:88px;height:48px;background:#f0f9eb;border:2px solid #e1f3d8;border-radius:8px"></div>
<div class="t" style="left:1710.00px;width:2000px;text-align:center;top:1257.50px;font-size:24px;color:#67c23a;font-weight:400;">正常</div>
<div class="a" style="left:2666px;top:1337.25px;width:88px;height:48px;background:#f0f9eb;border:2px solid #e1f3d8;border-radius:8px"></div>
<div class="t" style="left:1710.00px;width:2000px;text-align:center;top:1349.25px;font-size:24px;color:#67c23a;font-weight:400;">正常</div>
<div class="t" style="left:1913px;top:1456.00px;font-size:28px;color:#606266;font-weight:400;">共 8 条</div>
<div class="a" style="left:2033px;top:1439px;width:254px;height:62px;border:2px solid #dcdfe6;border-radius:8px;background:#fff"></div>
<div class="t" style="left:2056px;top:1456.00px;font-size:28px;color:#606266;font-weight:400;">10条/页</div>
<svg style="left:2239px;top:1463px" width="22" height="14" viewBox="0 0 22 14"><path d="M1,1.5 L11,11.5 L21,1.5" fill="none" stroke="#a8abb2" stroke-width="2"/></svg>
<div class="a" style="left:2320px;top:1438px;width:64px;height:64px;background:#f4f5f7;border-radius:4px"></div>
<svg style="left:2346px;top:1462px" width="12" height="18" viewBox="0 0 12 18"><path d="M10,1 L2,9 L10,17" fill="none" stroke="#a8abb2" stroke-width="2"/></svg>
<div class="a" style="left:2400px;top:1438px;width:64px;height:64px;background:#409eff;border-radius:4px"></div>
<div class="t" style="left:1432.00px;width:2000px;text-align:center;top:1456.00px;font-size:28px;color:#fff;font-weight:700;">1</div>
<div class="a" style="left:2480px;top:1438px;width:64px;height:64px;background:#f4f5f7;border-radius:4px"></div>
<svg style="left:2506px;top:1462px" width="12" height="18" viewBox="0 0 12 18"><path d="M2,1 L10,9 L2,17" fill="none" stroke="#a8abb2" stroke-width="2"/></svg>
<div class="t" style="left:2584px;top:1456.00px;font-size:28px;color:#606266;font-weight:400;">前往</div>
<div class="a" style="left:2656px;top:1439px;width:111px;height:62px;border:2px solid #dcdfe6;border-radius:8px;background:#fff"></div>
<div class="t" style="left:1711.50px;width:2000px;text-align:center;top:1456.00px;font-size:28px;color:#606266;font-weight:400;">1</div>
<div class="t" style="left:2784px;top:1456.00px;font-size:28px;color:#606266;font-weight:400;">页</div>
<div class="a" style="left:2800px;top:733px;width:80px;height:80px;background:#409eff;border-radius:14px 0 0 14px"></div>
<svg style="left:2820px;top:746px" width="40" height="40" viewBox="0 0 1454 1454" fill="none" stroke="#ffffff" stroke-width="70" stroke-linejoin="round"><path d="M599.7,361.0 L629.6,234.2 L820.4,234.2 L850.3,361.0 A385,385 0 0 1 977.6,434.4 L1102.4,397.0 L1197.8,562.2 L1102.9,651.5 A385,385 0 0 1 1102.9,798.5 L1197.8,887.8 L1102.4,1053.0 L977.6,1015.6 A385,385 0 0 1 850.3,1089.0 L820.4,1215.8 L629.6,1215.8 L599.7,1089.0 A385,385 0 0 1 472.4,1015.6 L347.6,1053.0 L252.2,887.8 L347.1,798.5 A385,385 0 0 1 347.1,651.5 L252.2,562.2 L347.6,397.0 L472.4,434.4 A385,385 0 0 1 599.7,361.0 Z"/><circle cx="725" cy="725" r="190"/></svg>
<div class="a" style="left:0px;top:1624px;width:2880px;height:2px;background:#f5f6f8"></div>
</body></html>
